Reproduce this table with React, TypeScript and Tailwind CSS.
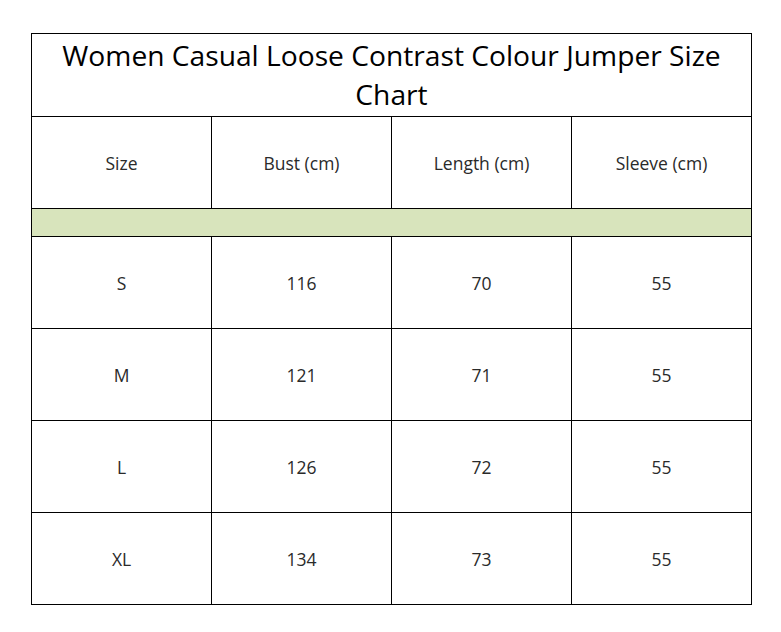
const headers = ["Size", "Bust (cm)", "Length (cm)", "Sleeve (cm)"];

const rows = [
  ["S", "116", "70", "55"],
  ["M", "121", "71", "55"],
  ["L", "126", "72", "55"],
  ["XL", "134", "73", "55"],
];

function Row({ cells }: { cells: string[] }) {
  return (
    <div className="flex h-[92px] border-b border-black last:h-[91px] last:border-b-0">
      {cells.map((c, i) => (
        <div
          key={i}
          className={
            i < 3
              ? "flex w-[180px] items-center justify-center border-r border-black pt-[2px]"
              : "flex w-[179px] items-center justify-center pt-[2px]"
          }
        >
          <span className="text-[17.5px] text-[#2a2a2a]">{c}</span>
        </div>
      ))}
    </div>
  );
}

export default function App() {
  return (
    <div className="h-[632px] w-[781px] bg-white pl-[31px] pt-[33px] font-['Open_Sans',sans-serif]">
      <div className="w-[721px] border border-black">
        <div className="flex h-[83px] items-start justify-center border-b border-black pt-[2px]">
          <h1 className="w-[690px] text-center text-[28.2px] leading-[39px] text-black">
            Women Casual Loose Contrast Colour Jumper Size Chart
          </h1>
        </div>
        <Row cells={headers} />
        <div className="h-[28px] border-b border-black bg-[#d8e4bc]" />
        {rows.map((r, i) => (
          <Row key={i} cells={r} />
        ))}
      </div>
    </div>
  );
}
